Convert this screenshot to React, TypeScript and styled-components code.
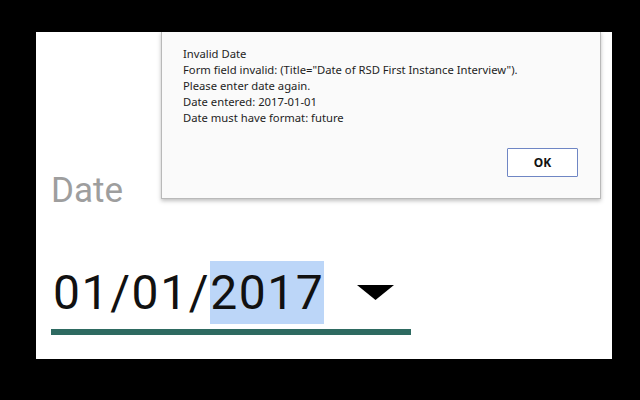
import styled, { createGlobalStyle } from "styled-components";

const GlobalStyle = createGlobalStyle`
  html, body {
    margin: 0;
    padding: 0;
    background: #000;
  }
  body {
    width: 640px;
    height: 400px;
    overflow: hidden;
  }
`;

const Stage = styled.div`
  width: 640px;
  height: 400px;
  padding: 32px 28px 41px 36px;
  box-sizing: border-box;
  background: #000;
`;

const Screen = styled.div`
  position: relative;
  width: 576px;
  height: 327px;
  background: #fff;
  overflow: hidden;
`;

const Field = styled.div`
  display: flex;
  flex-direction: column;
  align-items: flex-start;
  padding: 138px 0 0 15px;
  font-family: Roboto, "Liberation Sans", sans-serif;
`;

const Label = styled.div`
  font-size: 35px;
  line-height: 41px;
  color: #9e9e9e;
`;

const ValueRow = styled.div`
  display: flex;
  align-items: center;
  width: 360px;
  height: 63px;
  margin-top: 50px;
  padding-left: 2px;
  box-sizing: border-box;
`;

const DateText = styled.div`
  font-size: 48px;
  line-height: 63px;
  letter-spacing: 1.6px;
  color: #111;
  white-space: nowrap;
`;

const Selected = styled.span`
  display: inline-block;
  height: 63px;
  background: #bcd6f8;
`;

const Caret = styled.svg`
  margin-left: 33px;
  flex: none;
`;

const Underline = styled.div`
  width: 360px;
  height: 6px;
  margin-top: 5px;
  background: #2e6a61;
`;

const Dialog = styled.div`
  position: absolute;
  top: -1px;
  left: 125px;
  width: 440px;
  height: 168px;
  box-sizing: border-box;
  padding: 14px 21px 0 21px;
  background: #fafafa;
  border: 1px solid #b9b9b9;
  box-shadow: 0 2px 4px rgba(0, 0, 0, 0.25);
  font-family: "Noto Sans", "Open Sans", sans-serif;
  font-size: 11.25px;
  line-height: 16px;
  color: #1e1e1e;
  display: flex;
  flex-direction: column;
`;

const Message = styled.div`
  white-space: pre;
`;

const Actions = styled.div`
  display: flex;
  justify-content: flex-end;
  margin-top: 22px;
  padding-right: 1px;
`;

const OkButton = styled.button`
  width: 71px;
  height: 29px;
  background: #fff;
  border: 1px solid #6f86c4;
  border-radius: 1px;
  font-family: "Noto Sans", "Open Sans", sans-serif;
  font-size: 12px;
  font-weight: bold;
  color: #111;
  padding: 0;
`;

const lines = [
  "Invalid Date",
  'Form field invalid: (Title="Date of RSD First Instance Interview").',
  "Please enter date again.",
  "Date entered: 2017-01-01",
  "Date must have format: future",
];

export default function App() {
  return (
    <>
      <GlobalStyle />
      <Stage>
        <Screen>
          <Field>
            <Label>Date</Label>
            <ValueRow>
              <DateText>
                01/01/<Selected>2017</Selected>
              </DateText>
              <Caret width="37" height="15" viewBox="0 0 37 15">
                <polygon points="0,0 37,0 18.5,15" fill="#000" />
              </Caret>
            </ValueRow>
            <Underline />
          </Field>
          <Dialog>
            {lines.map((line) => (
              <Message key={line}>{line}</Message>
            ))}
            <Actions>
              <OkButton>OK</OkButton>
            </Actions>
          </Dialog>
        </Screen>
      </Stage>
    </>
  );
}
